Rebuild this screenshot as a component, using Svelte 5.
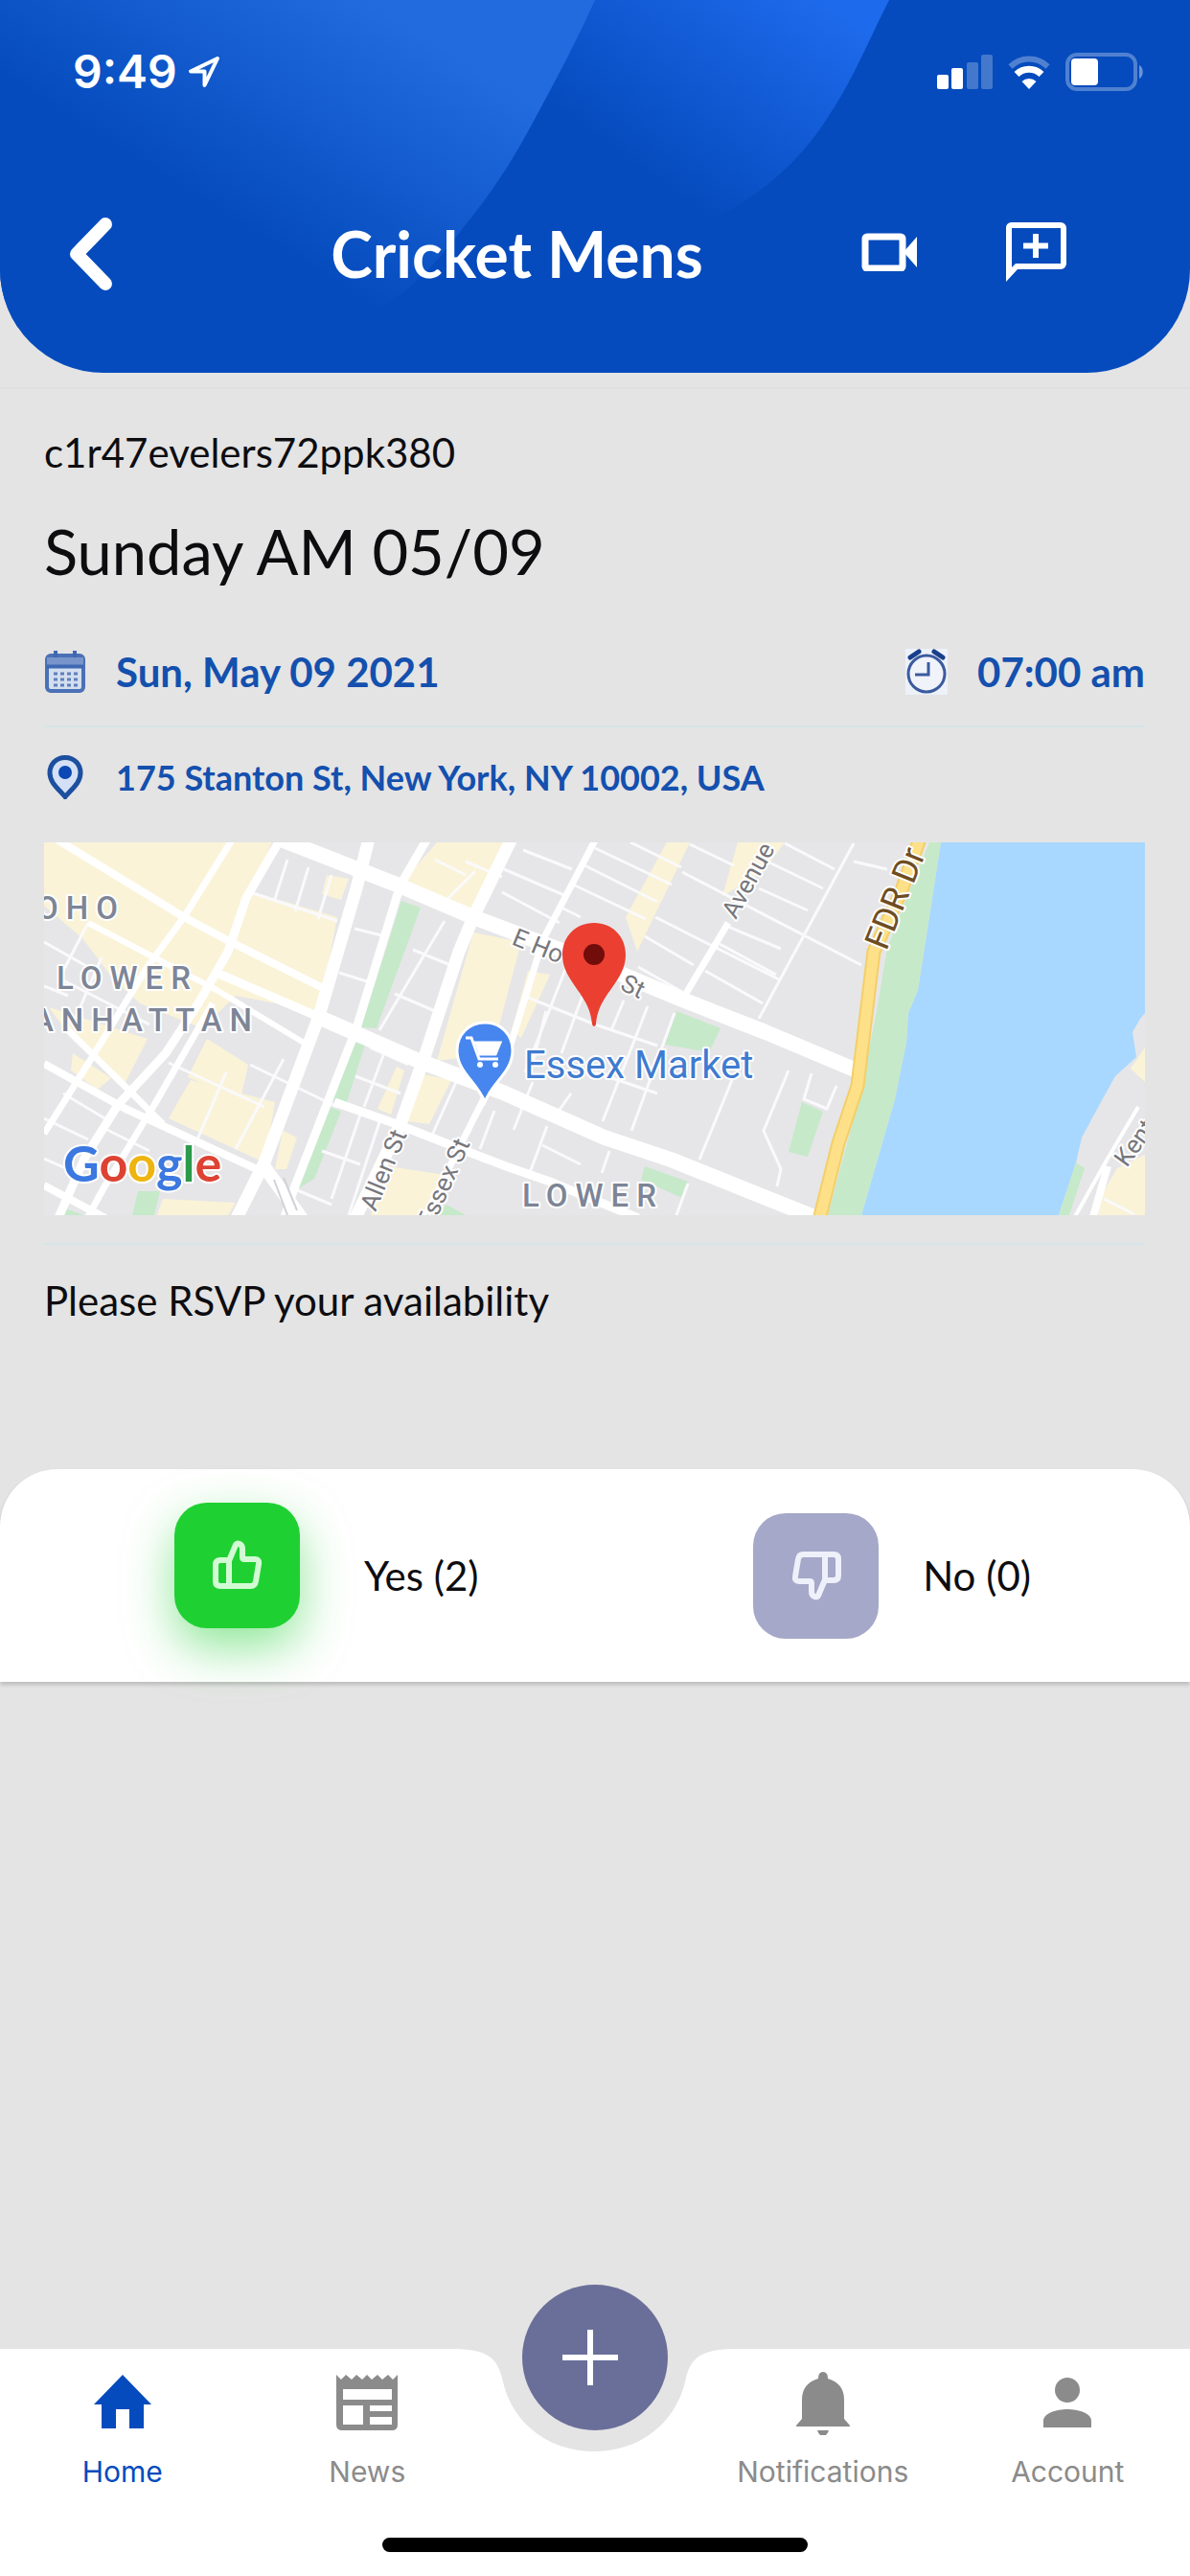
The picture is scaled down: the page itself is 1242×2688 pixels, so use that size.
<script>
  let { team = 'Cricket Mens' } = $props();

  let answer = $state('yes');

  // Street map geometry, in the map's own 1149 x 389 space.
  const blocks = [
    'M0 0H238L215 51 306 78 287 178 275 182 262 172 200 160 165 194 100 168 70 140 40 100 0 66Z',
    'M5 172L108 205 85 250 58 230 30 206Z',
    'M170 205L213 232 205 268 150 245Z',
    'M153 248L241 271 230 334 130 288Z',
    'M30 220L70 246 56 258 28 238Z',
    'M383 31L410 0H482L452 78 375 48Z',
    'M295 34L318 38 310 60 290 54Z',
    'M448 94L498 104 467 221 410 228Z',
    'M505 134L528 138 498 204 488 196Z',
    'M391 241L425 248 402 294 379 291Z',
    'M368 234L376 238 362 284 348 278Z',
    'M249 301L264 308 253 341 241 341Z',
    'M360 338L425 348 402 389H341Z',
    'M124 372L200 376 192 389H118Z',
    'M650 0H674L619 114 607 78Z',
    'M724 0H773L750 31 708 56Z',
    'M1120 340L1149 326V389H1100L1106 364Z',
    'M1149 214L1134 236 1149 250Z'
  ];
  const parks = [
    'M373 61L393 68 347 194 331 193Z',
    'M320 208L335 211 316 271 301 269Z',
    'M293 274L310 281 282 351 266 361Z',
    'M660 176L706 194 694 219 648 211Z',
    'M791 271L813 281 797 328 777 323Z',
    'M627 338L672 354 666 371 623 352Z',
    'M98 364H121L115 389H92Z',
    'M16 380L42 389H14Z',
    'M420 378L440 389H408Z',
    'M924 0H936L912 154 902 178 900 208 888 268 853 389H818L853 258 868 181 880 111 904 48Z',
    'M1077 334L1086 340 1070 389H1059Z'
  ];
  const lanes =
    'M0 104L46 130M46 84L20 134M20 144L110 190M60 120L30 190M0 150L25 160' +
    'M254 18L240 62M276 26L262 72M300 34L286 80M215 52L306 82' +
    'M324 90L356 98M308 136L340 146M385 112L424 128M366 158L408 176M418 82L350 196' +
    'M215 232L306 276M250 226L200 320M190 240L160 310M130 230L230 276M276 214L262 262' +
    'M340 214L380 232M325 244L372 262M357 214L334 276M330 284L300 372M290 322L330 336M350 292L318 389' +
    'M0 288L46 310M20 262L70 292M0 330L50 352M66 300L110 322' +
    'M408 18L440 34M440 20L478 36M420 60L450 30' +
    'M500 8L551 28M480 28L545 56M478 52L538 84M560 22L640 62M552 44L628 80M540 68L560 78' +
    'M575 6L655 44M612 0L665 26' +
    'M666 31L853 128M674 2L720 24M773 1L825 28M757 21L813 48M746 48L797 71M714 88L769 111M638 78L769 144' +
    'M627 98L678 128M620 130L666 156M690 134L750 168M705 106L764 138M845 20L880 28' +
    'M845 1L746 184M630 171L583 291M658 178L613 301M605 165L592 196M718 248L684 331' +
    'M777 238L751 301 769 341 765 359M801 241L793 268 817 278 827 254' +
    'M500 160L575 190 640 212M575 240L640 262M545 130L502 240M562 160L540 220M524 176L510 230' +
    'M510 250L490 300M550 262L530 290M525 296L505 350M520 316L560 336M590 322L582 345M672 356L660 389' +
    'M470 280L455 320M430 250L402 312M262 362L300 378M1106 372L1138 388';
  const roads = [
    { w: 16, d: 'M245 -4L368 44 448 78 575 126 666 164 753 198 848 238' },
    { w: 9, d: 'M180 136L291 184' },
    { w: 16, d: 'M288 183L391 228 479 261 585 308 654 331 806 392' },
    { w: 9, d: 'M303 271L368 294 482 338 528 354 620 392' },
    { w: 13, d: 'M339 -4L326 48 287 181 230 334 200 394' },
    { w: 9, d: 'M400 -4L372 44 326 194 261 361 250 394' },
    { w: 13, d: 'M488 -4L448 78 433 114 398 221 372 294 324 394' },
    { w: 7, d: 'M576 -4L521 101 486 214 437 311 396 394' },
    { w: 8, d: 'M12 -4L146 78 195 104 291 152' },
    { w: 6, d: 'M46 84L111 118 180 154 276 212' },
    { w: 7, d: 'M197 -4L146 78 107 131 54 218 0 304' },
    { w: 9, d: 'M247 -4L211 58 192 114 161 168 127 220 77 274 42 330 14 394' },
    { w: 7, d: 'M176 168L115 274 62 361 44 394' },
    { w: 8, d: 'M0 231L85 278 222 341' },
    { w: 7, d: 'M23 194L88 258 124 294' },
    { w: 8, d: 'M0 358L64 392' },
    { w: 7, d: 'M714 84L668 161' },
    { w: 14, d: 'M228 336L270 394' },
    { w: 8, d: 'M1110 338L1094 394' },
    { w: 4, d: 'M1142 276L1110 330 1074 394' }
  ];
</script>

<div class="screen">
  <header class="header">
    <svg class="header-art" viewBox="0 0 1242 389" preserveAspectRatio="none" aria-hidden="true">
      <defs>
        <linearGradient id="swoosh-a" gradientUnits="userSpaceOnUse" x1="400" y1="330" x2="543" y2="100">
          <stop offset="0" stop-color="#054bbd" />
          <stop offset="1" stop-color="#216bdf" />
        </linearGradient>
        <linearGradient id="swoosh-b" gradientUnits="userSpaceOnUse" x1="740" y1="230" x2="889" y2="22">
          <stop offset="0" stop-color="#054bbd" />
          <stop offset="1" stop-color="#1e6aec" />
        </linearGradient>
      </defs>
      <path fill="url(#swoosh-b)" d="M500 0H928C905 45 890 85 859 130C825 180 780 212 740 230C690 250 600 255 500 250Z" />
      <path fill="url(#swoosh-a)" d="M0 0H621C602 42 582 80 562 117C538 162 520 192 487 233C455 275 420 318 360 338C260 350 100 350 0 340Z" />
    </svg>

    <div class="status">
      <div class="clock">
        <span>9:49</span>
        <svg width="36" height="36" viewBox="0 0 36 36" aria-hidden="true">
          <path d="M32 4L4 17.500H18.500V32Z" fill="none" stroke="#fff" stroke-width="4" stroke-linejoin="round" />
        </svg>
      </div>
      <div class="signals">
        <svg width="58" height="36" viewBox="0 0 58 36" fill="#fff" aria-label="Signal">
          <rect x="0" y="21" width="12" height="15" rx="2" />
          <rect x="15" y="14" width="12" height="22" rx="2" />
          <rect x="31" y="8" width="12" height="28" rx="2" opacity=".25" />
          <rect x="46" y="0" width="12" height="36" rx="2" opacity=".25" />
        </svg>
        <svg width="44" height="36" viewBox="0 0 44 36" aria-label="Wi-Fi">
          <path d="M2.500 12.500A28 28 0 0 1 41.500 12.500" fill="none" stroke="#fff" stroke-width="6" opacity=".3" />
          <path d="M9 20.500A18.500 18.500 0 0 1 35 20.500" fill="none" stroke="#fff" stroke-width="7" />
          <path d="M14.500 28A11 11 0 0 1 29.500 28L22 36Z" fill="#fff" />
        </svg>
        <svg width="82" height="40" viewBox="0 0 82 40" aria-label="Battery">
          <rect x="2" y="2" width="71" height="36" rx="10" fill="none" stroke="#fff" stroke-width="4" opacity=".3" />
          <rect x="6" y="6" width="28" height="28" rx="4" fill="#fff" />
          <path d="M77 13C82 15 82 25 77 27Z" fill="#fff" opacity=".4" />
        </svg>
      </div>
    </div>

    <div class="bar">
      <button type="button" aria-label="Back">
        <svg width="48" height="80" viewBox="0 0 48 80">
          <path d="M40 9L10 40 40 71" fill="none" stroke="#fff" stroke-width="14" stroke-linecap="round" stroke-linejoin="round" />
        </svg>
      </button>
      <h1>{team}</h1>
      <div class="bar-actions">
        <button type="button" aria-label="Video">
          <svg width="58" height="40" viewBox="0 0 58 40">
            <rect x="4" y="4" width="39" height="33" rx="2" fill="none" stroke="#fff" stroke-width="7" />
            <path d="M44 20L58 4V36Z" fill="#fff" />
          </svg>
        </button>
        <button type="button" aria-label="New message">
          <svg width="64" height="64" viewBox="0 0 64 64">
            <path fill="#fff" fill-rule="evenodd" d="M6 1H58A6 6 0 0 1 64 7V44A6 6 0 0 1 58 50H13L1 63V7A6 6 0 0 1 6 1ZM7 7V48L11 44H58V7Z" />
            <path d="M32 13V38M19 25.500H45" stroke="#fff" stroke-width="6" />
          </svg>
        </button>
      </div>
    </div>
  </header>

  <main>
    <section class="event">
      <p class="code">c1r47evelers72ppk380</p>
      <h2>Sunday AM 05/09</h2>

      <div class="row when">
        <span class="fact">
          <svg width="44" height="46" viewBox="0 0 44 46" aria-hidden="true">
            <rect x="3" y="6" width="38" height="37" rx="4" fill="#d3deef" stroke="#4a70b6" stroke-width="4" />
            <path d="M3 8H41V17H3Z" fill="#7894cb" />
            <path d="M3 17.500H41M12 1V8M32 1V8" stroke="#3f68b2" stroke-width="4" />
            <path d="M10 25H36M10 31H36M10 37H36" stroke="#5f7fbc" stroke-width="3" stroke-dasharray="4 3" />
          </svg>
          Sun, May 09 2021
        </span>
        <span class="fact">
          <svg width="44" height="48" viewBox="0 0 44 48" aria-hidden="true">
            <rect width="44" height="48" fill="#edf1f9" />
            <circle cx="22" cy="26" r="19" fill="#f1f3fb" stroke="#3b5b9e" stroke-width="3" />
            <path d="M24 14V27H10" fill="none" stroke="#3b5b9e" stroke-width="3" />
            <path d="M5 9L14 3M30 3L39 9" stroke="#173f8c" stroke-width="5" stroke-linecap="round" />
          </svg>
          07:00 am
        </span>
      </div>

      <div class="row where">
        <span class="fact">
          <svg width="44" height="46" viewBox="0 0 44 46" aria-hidden="true">
            <path d="M22 2.500C12 2.500 6 10 6 18.500C6 29 15 35 22 43.500C29 35 38 29 38 18.500C38 10 32 2.500 22 2.500Z" fill="#d3e0f5" stroke="#1d4f9f" stroke-width="5" />
            <circle cx="22" cy="18" r="7" fill="#0b48b5" />
          </svg>
          175 Stanton St, New York, NY 10002, USA
        </span>

        <svg class="map" viewBox="0 0 1149 389" role="img" aria-label="Map of 175 Stanton St">
          <rect width="1149" height="389" fill="#e6e6e8" />
          {#each blocks as d}
            <path {d} fill="#faf3d8" />
          {/each}
          <path d="M936 0H1149V178L1144 184 1136 198 1140 224 1118 244 1103 271 1083 308 1077 334 1059 389H853L888 268 900 208 902 178 912 154Z" fill="#a8d8ff" />
          {#each parks as d}
            <path {d} fill="#c6e9ca" />
          {/each}
          <path d={lanes} class="lane" />
          {#each roads as road}
            <path d={road.d} class="road" stroke-width={road.w} />
          {/each}
          <path d="M240 352L254 389M250 350L264 384" stroke="#d0d2d8" stroke-width="2" />
          <path d="M914 -4L895 50 866 114 853 221 849 254 829 314 809 394" class="fdr-edge" />
          <path d="M914 -4L895 50 866 114 853 221 849 254 829 314 809 394" class="fdr" />

          <text class="area" x="85" y="80" text-anchor="end">SOHO</text>
          <text class="area" x="13" y="153">LOWER</text>
          <text class="area" x="225" y="197" text-anchor="end">MANHATTAN</text>
          <text class="area" x="499" y="380">LOWER</text>
          <text class="street" transform="translate(487 106) rotate(22)">E Ho</text>
          <text class="street" transform="translate(600 153) rotate(26)">St</text>
          <text class="street" transform="translate(346 386) rotate(-68)">Allen St</text>
          <text class="street" text-anchor="end" transform="translate(445 314) rotate(-66)">Essex St</text>
          <text class="street" transform="translate(722 81) rotate(-61)">Avenue C</text>
          <text class="street" transform="translate(1130 340) rotate(-54)">Kent</text>
          <text class="drive" transform="translate(879 114) rotate(-68)">FDR Dr</text>

          <path d="M460 188C443 188 431 201 431 217C431 240 452 250 460 271C468 250 489 240 489 217C489 201 477 188 460 188Z" fill="#4686ee" stroke="#fff" stroke-width="3" />
          <path d="M440 204H446L454 226H474M449 209H476L471 221H453" fill="none" stroke="#fff" stroke-width="3" />
          <path d="M449 208H477L472 222H454Z" fill="#fff" />
          <circle cx="455" cy="232" r="3" fill="#fff" />
          <circle cx="471" cy="232" r="3" fill="#fff" />
          <text class="place" x="501" y="246">Essex Market</text>

          <path d="M574 84C555 84 541 98 541 117C541 146 570 158 572 190Q574 194 576 190C578 158 607 146 607 117C607 98 593 84 574 84Z" fill="#ea3f31" />
          <circle cx="574" cy="117" r="11" fill="#710d0b" />

          <text class="google" x="20" y="354"><tspan fill="#3b78e0">G</tspan><tspan fill="#dd4333">o</tspan><tspan fill="#eeb410">o</tspan><tspan fill="#3b78e0">g</tspan><tspan fill="#2c9a4b">l</tspan><tspan fill="#dd4333">e</tspan></text>
        </svg>
      </div>

      <p class="prompt">Please RSVP your availability</p>
    </section>

    <section class="rsvp" aria-label="RSVP">
      <div class="choice yes">
        <button type="button" aria-labelledby="rsvp-yes" aria-pressed={answer === 'yes'} onclick={() => (answer = 'yes')}>
          <svg width="52" height="52" viewBox="0 0 52 52" aria-hidden="true">
            <path d="M16 24L24 5C25 2 31 4 31 9V18Q31 20 33 20H44Q49 20 48 25L45 43Q44 48 40 48H8Q3 48 3 43V26Q3 21 8 21H17M17 23V48" />
          </svg>
        </button>
        <span id="rsvp-yes">Yes (2)</span>
      </div>
      <div class="choice no">
        <button type="button" aria-labelledby="rsvp-no" aria-pressed={answer === 'no'} onclick={() => (answer = 'no')}>
          <svg width="52" height="52" viewBox="0 0 52 52" aria-hidden="true">
            <path d="M36 28L28 47C27 50 21 48 21 43V34Q21 32 19 32H8Q3 32 4 27L7 9Q8 4 12 4H44Q49 4 49 9V26Q49 31 44 31H35M35 29V4" />
          </svg>
        </button>
        <span id="rsvp-no">No (0)</span>
      </div>
    </section>
  </main>

  <nav class="tabs" aria-label="Main">
    <svg class="notch" width="300" height="110" viewBox="0 0 300 110" aria-hidden="true">
      <path d="M0 0C36 0 47 8 53 30C62 76 100 107 149 107C198 107 236 76 245 30C251 8 262 0 300 0Z" fill="#e4e4e4" />
    </svg>
    <a class="tab active" href="#home" aria-current="page">
      <svg width="66" height="68" viewBox="0 0 66 68" aria-hidden="true">
        <path d="M33 5L63 36H55V61H40V41H26V61H11V36H3Z" fill="currentColor" />
      </svg>
      Home
    </a>
    <a class="tab" href="#news">
      <svg width="66" height="68" viewBox="0 0 66 68" aria-hidden="true">
        <path fill="currentColor" fill-rule="evenodd" d="M1 5L6 10 11 5 17 10 22 5 28 10 33 5 38 10 44 5 49 10 55 5 60 10 65 5V57Q65 63 59 63H7Q1 63 1 57ZM8 20V31H59V20ZM8 37V57H29V37ZM36 37V43H59V37ZM36 49V57H59V49Z" />
      </svg>
      News
    </a>
    <button type="button" class="add" aria-label="Add">
      <svg width="60" height="60" viewBox="0 0 60 60">
        <path d="M30 1V59M1 30H59" stroke="#fff" stroke-width="6" />
      </svg>
    </button>
    <a class="tab" href="#notifications">
      <svg width="66" height="68" viewBox="0 0 66 68" aria-hidden="true">
        <path fill="currentColor" d="M33 2Q38 2 38 9Q55 14 55 31V51L61 58V59H5V58L11 51V31Q11 14 28 9Q28 2 33 2ZM27 63H39Q37 69 33 69Q29 69 27 63Z" />
      </svg>
      Notifications
    </a>
    <a class="tab" href="#account">
      <svg width="66" height="68" viewBox="0 0 66 68" aria-hidden="true">
        <circle cx="33" cy="21" r="13" fill="currentColor" />
        <path d="M8 60V53C8 45 22 41 33 41C44 41 58 45 58 53V60Z" fill="currentColor" />
      </svg>
      Account
    </a>
    <div class="home-indicator"></div>
  </nav>
</div>

<style>
  :global(body) {
    margin: 0;
    background: #e4e4e4;
  }

  .screen {
    display: flex;
    flex-direction: column;
    min-height: 100vh;
    font-family: Lato, sans-serif;
    color: #0d0d10;
    background: #e4e4e4;
  }

  button {
    padding: 0;
    border: 0;
    background: none;
    font: inherit;
    cursor: pointer;
  }

  svg {
    display: block;
    flex-shrink: 0;
  }

  h1,
  h2,
  p {
    margin: 0;
    font-weight: 400;
  }

  /* Header */
  .header {
    position: relative;
    box-sizing: border-box;
    height: 389px;
    overflow: hidden;
    border-radius: 0 0 108px 108px;
    background: #054bbd;
    color: #fff;
  }

  .header-art {
    position: absolute;
    inset: 0;
    width: 100%;
    height: 100%;
  }

  .status {
    position: relative;
    display: flex;
    align-items: center;
    justify-content: space-between;
    height: 150px;
    padding: 0 48px 0 76px;
  }

  .clock {
    display: flex;
    align-items: center;
    gap: 10px;
    font: 600 48px/60px Inter, sans-serif;
  }

  .signals {
    display: flex;
    align-items: center;
    gap: 16px;
  }

  .bar {
    position: relative;
    display: flex;
    align-items: center;
    height: 230px;
    box-sizing: border-box;
    padding: 0 129px 0 70px;
  }

  h1 {
    flex: 1;
    padding-left: 62px;
    font-size: 66px;
    font-weight: 700;
    line-height: 80px;
    text-align: center;
  }

  .bar-actions {
    display: flex;
    align-items: center;
    gap: 92px;
    padding-bottom: 4px;
  }

  /* Event */
  .event {
    margin-top: 15px;
    padding: 41px 47px 0 46px;
    border-top: 2px solid #dfdfe1;
  }

  .code,
  .prompt {
    font-size: 42px;
    line-height: 50px;
  }

  h2 {
    margin-top: 38px;
    font-size: 65px;
    line-height: 80px;
  }

  .row {
    border-bottom: 2px solid #d5e4e8;
  }

  .when {
    display: flex;
    justify-content: space-between;
    margin-top: 61px;
    padding-bottom: 31px;
  }

  .where {
    padding: 27px 0 29px;
  }

  .fact {
    display: flex;
    align-items: center;
    gap: 31px;
    font-size: 42px;
    font-weight: 700;
    line-height: 50px;
    color: #1450ae;
  }

  .where .fact {
    font-size: 36px;
  }

  .map {
    width: 100%;
    height: auto;
    margin-top: 43px;
    font-family: Roboto, sans-serif;
  }

  .lane {
    fill: none;
    stroke: #fafafc;
    stroke-width: 3px;
  }

  .road {
    fill: none;
    stroke: #fff;
    stroke-linejoin: round;
  }

  .fdr-edge {
    fill: none;
    stroke: #f3cf6a;
    stroke-width: 15px;
  }

  .fdr {
    fill: none;
    stroke: #fde088;
    stroke-width: 11px;
  }

  .map text {
    paint-order: stroke;
    stroke: #fff;
    stroke-width: 4px;
    stroke-linejoin: round;
  }

  .area {
    font-size: 33px;
    font-weight: 500;
    letter-spacing: 8px;
    fill: #7d8596;
  }

  .street {
    font-size: 26px;
    fill: #77777c;
  }

  .drive {
    font-size: 36px;
    fill: #6f4d22;
  }

  .place {
    font-size: 40px;
    fill: #3f7bd0;
  }

  .google {
    font-family: Lato, sans-serif;
    font-size: 52px;
    font-weight: 700;
  }

  .prompt {
    margin-top: 33px;
  }

  /* RSVP */
  .rsvp {
    display: grid;
    grid-template-columns: 57fr 43fr;
    align-items: center;
    height: 222px;
    margin-top: 151px;
    padding-left: 182px;
    border-radius: 60px 60px 0 0;
    background: #fff;
    box-shadow: 0 3px 4px rgb(0 0 0 / 18%);
    font-size: 42px;
    line-height: 50px;
  }

  .choice {
    display: flex;
    align-items: center;
    gap: 46px;
  }

  .yes {
    gap: 67px;
  }

  .choice button {
    display: grid;
    place-items: center;
    width: 131px;
    height: 131px;
    border-radius: 34px;
    background: #a5a8c8;
  }

  .yes button {
    margin-bottom: 22px;
    background: #1fd033;
    box-shadow: 0 20px 50px rgb(31 208 51 / 50%);
  }

  .choice path {
    fill: none;
    stroke: #eef0fa;
    stroke-width: 6px;
    stroke-linejoin: round;
  }

  .yes path {
    stroke: #d2fbd4;
  }

  /* Tabs */
  .tabs {
    position: relative;
    display: grid;
    grid-template-columns: 1fr 1fr 220px 1fr 1fr;
    justify-items: center;
    align-items: start;
    box-sizing: border-box;
    height: 237px;
    margin-top: auto;
    background: #fff;
  }

  .notch {
    position: absolute;
    top: 0;
    left: 50%;
    margin-left: -150px;
  }

  .tab {
    display: flex;
    flex-direction: column;
    align-items: center;
    gap: 18px;
    padding-top: 22px;
    font: 400 30px/40px Inter, sans-serif;
    color: #8b8b8b;
    text-decoration: none;
  }

  .tab.active {
    color: #054bbd;
  }

  .add {
    z-index: 1;
    display: grid;
    place-items: center;
    box-sizing: border-box;
    width: 152px;
    height: 152px;
    margin-top: -67px;
    padding-right: 10px;
    border-radius: 50%;
    background: #6a6f99;
  }

  .home-indicator {
    position: absolute;
    bottom: 25px;
    left: 50%;
    width: 444px;
    height: 15px;
    margin-left: -222px;
    border-radius: 8px;
    background: #000;
  }
</style>
